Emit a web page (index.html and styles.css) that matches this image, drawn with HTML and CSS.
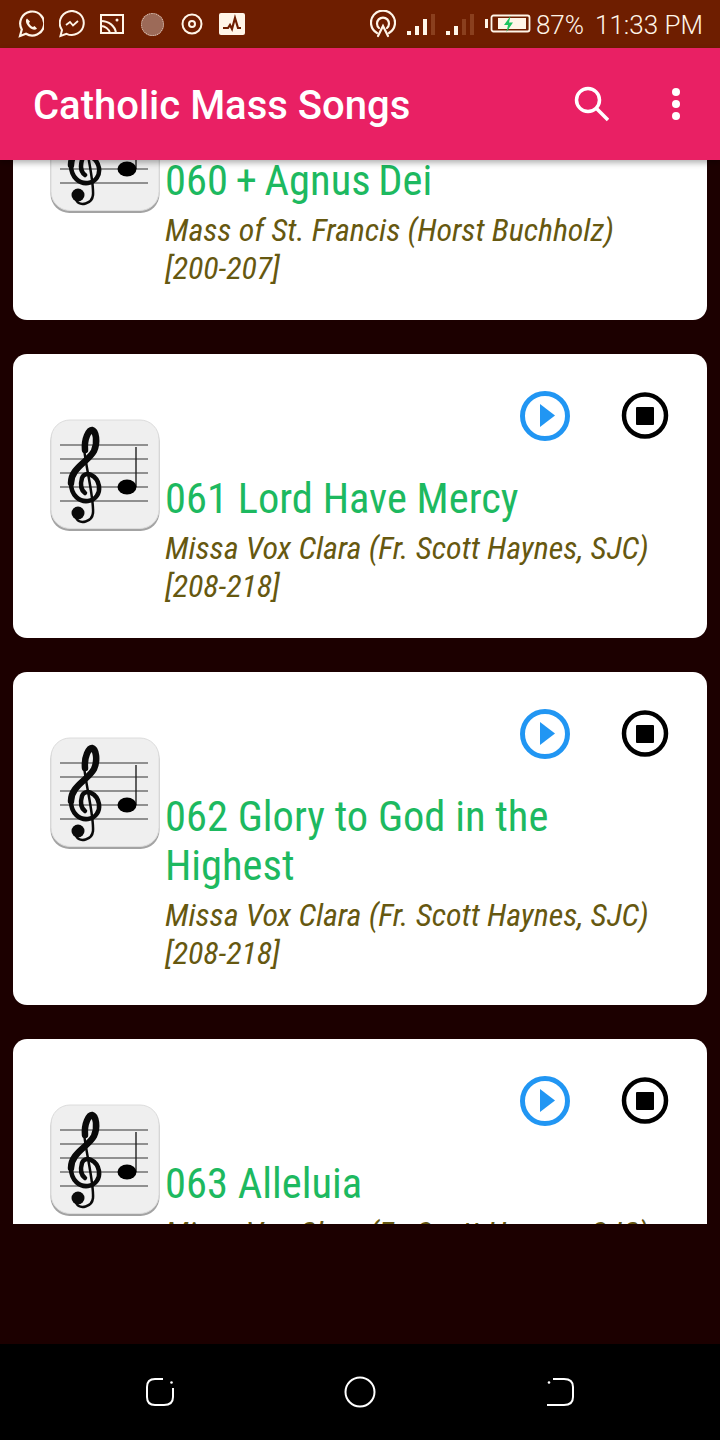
FILE: index.html
```html
<!DOCTYPE html>
<html lang="en">
<head>
  <meta charset="UTF-8" />
  <meta name="viewport" content="width=device-width, initial-scale=1" />
  <title>Catholic Mass Songs</title>
  <link rel="stylesheet" href="styles.css">
</head>
<body>
  <svg class="defs" width="0" height="0">
    <symbol id="sheet" viewBox="0 0 110 114">
      <rect x="0.500" y="4" width="109" height="109" rx="19" fill="#a3a3a3"/>
      <rect x="1" y="2" width="108" height="108.500" rx="19" fill="#efefef" stroke="#dcdcdc"/>
      <g stroke="#333" stroke-width="1.2">
        <line x1="10" y1="27" x2="98" y2="27"/>
        <line x1="10" y1="41" x2="98" y2="41"/>
        <line x1="10" y1="55" x2="98" y2="55"/>
        <line x1="10" y1="69" x2="98" y2="69"/>
        <line x1="10" y1="83" x2="98" y2="83"/>
      </g>
      <line x1="86" y1="29" x2="86" y2="69" stroke="#222" stroke-width="1.4"/>
      <ellipse cx="77" cy="69" rx="9.500" ry="7.500" fill="#000"/>
      <!-- treble clef -->
      <g fill="none" stroke="#0a0a0a" stroke-linecap="round">
        <path stroke-width="2.500" d="M34 30 C36 50 44 80 43 95 C42 104 30 107 26 100"/>
        <path stroke-width="6.500" d="M35 32 C34 20 39 12 42 12 C46 13 48 24 44 33 C38 44 21 50 21 65"/>
        <path stroke-width="4.500" d="M21 65 C21 78 30 84 38 83 C46 82 50 75 49 68 C47 57 35 52 32 60 C30 67 31 72 35 75"/>
      </g>
      <circle cx="28" cy="95" r="6.500" fill="#0a0a0a"/>
    </symbol>
    <symbol id="play" viewBox="0 0 50 50">
      <circle cx="25" cy="25" r="22.500" fill="none" stroke="#2196f3" stroke-width="5"/>
      <path d="M20 13 L35 24.500 L20 36 Z" fill="#2196f3"/>
    </symbol>
    <symbol id="stop" viewBox="0 0 50 50">
      <circle cx="25" cy="24.500" r="21" fill="none" stroke="#000" stroke-width="4.500"/>
      <rect x="16" y="16" width="18" height="18" rx="1" fill="#000"/>
    </symbol>
  </svg>

  <div class="status-bar">
    <div class="status-icons">
      <svg width="26" height="28" viewBox="1 0 26 28" fill="none" stroke="#fff5e8" stroke-width="2.200"><path d="M3 26 L4.800 19.500 A12 12 0 1 1 9 23.800 Z"/><path d="M10 8.500 C8 10 9 14 12 17 C15 20 18.500 20.500 20 18.500 L17.500 16 L16 17 C14.500 16.500 12.500 14.500 12 13 L13 11.500 Z" fill="#fff5e8" stroke="none"/></svg>
      <svg width="26" height="28" viewBox="1 0 26 28" fill="none" stroke="#fff5e8" stroke-width="2"><path d="M2.500 26 L4 20 A12 12 0 1 1 8.500 23.800 Z"/><path d="M8 15 L12 12 L15 15.500 L20 11" stroke-width="1.800"/></svg>
      <svg width="24" height="20" viewBox="0 0 24 20" fill="none" stroke="#fff5e8" stroke-width="2"><rect x="1" y="1" width="22" height="18"/><path d="M1 7 C9 7 15 12 16 19 M1 12 C5 12 9 15 10 19"/><circle cx="17" cy="6" r="1.500" fill="#fff5e8" stroke="none"/></svg>
      <span class="gallery-dot"></span>
      <svg width="22" height="22" viewBox="0 0 22 22" fill="none" stroke="#fff5e8" stroke-width="2"><circle cx="11" cy="11" r="9.500"/><circle cx="11" cy="11" r="3"/></svg>
      <svg class="pulse" width="26" height="22" viewBox="0 0 26 22"><rect width="26" height="22" rx="2" fill="#fff5e8"/><path d="M4 15 L9 15 L11 12 L13 16 L16 5 L19 15 L22 15" fill="none" stroke="#6e1e00" stroke-width="2.200"/></svg>
    </div>
    <div class="status-right">
      <svg width="26" height="28" viewBox="0 0 26 28" fill="none" stroke="#fff5e8" stroke-width="2.200" stroke-linecap="round"><path d="M7 23 A12 12 0 1 1 19 23"/><path d="M9 18 A6 6 0 1 1 17 18"/><path d="M8 26 L13 16 L18 26"/></svg>
      <svg width="28" height="21" viewBox="0 0 28 21"><rect x="0" y="17" width="4" height="4" fill="#fff5e8"/><rect x="8" y="12" width="4" height="9" fill="#fff5e8"/><rect x="16" y="5" width="4" height="16" fill="#fff5e8"/><rect x="24" y="0" width="4" height="21" fill="#8a3f1e"/></svg>
      <svg width="28" height="21" viewBox="0 0 28 21"><rect x="0" y="17" width="4" height="4" fill="#fff5e8"/><rect x="8" y="12" width="4" height="9" fill="#fff5e8"/><rect x="16" y="5" width="4" height="16" fill="#8a3f1e"/><rect x="24" y="0" width="4" height="21" fill="#8a3f1e"/></svg>
      <svg class="battery" width="46" height="20" viewBox="0 0 46 20"><rect x="0" y="5" width="3" height="9" fill="#fff5e8"/><rect x="6.500" y="1.500" width="38" height="16" rx="2" fill="none" stroke="#fff5e8" stroke-width="1.800"/><rect x="13" y="4" width="28" height="11" fill="#fff5e8"/><path d="M25.500 2 L19 11 L23 11 L21.500 18 L28 8.500 L24 8.500 Z" fill="#1fc25f"/></svg>
      <span class="status-text">87%</span>
      <span class="status-text">11:33 PM</span>
    </div>
  </div>

  <header class="app-bar">
    <span class="app-title">Catholic Mass Songs</span>
    <div class="app-actions">
      <svg width="36" height="36" viewBox="0 0 36 36" fill="none" stroke="#fff" stroke-width="3.500"><circle cx="15" cy="14" r="11.500"/><path d="M23 22 L35 34"/></svg>
      <svg width="12" height="36" viewBox="0 0 12 36" fill="#fff"><circle cx="6" cy="6" r="4"/><circle cx="6" cy="18" r="4"/><circle cx="6" cy="30" r="4"/></svg>
    </div>
  </header>

  <main class="song-list">
    <div class="song-card">
      <svg class="song-icon"><use href="#sheet"/></svg>
      <div class="song-body">
        <div class="song-controls">
          <svg class="ctrl"><use href="#play"/></svg>
          <svg class="ctrl"><use href="#stop"/></svg>
        </div>
        <h2 class="song-title tight">060 + Agnus Dei</h2>
        <p class="song-sub">Mass of St. Francis (Horst Buchholz) [200-207]</p>
      </div>
    </div>
    <div class="song-card">
      <svg class="song-icon"><use href="#sheet"/></svg>
      <div class="song-body">
        <div class="song-controls">
          <svg class="ctrl"><use href="#play"/></svg>
          <svg class="ctrl"><use href="#stop"/></svg>
        </div>
        <h2 class="song-title">061 Lord Have Mercy</h2>
        <p class="song-sub">Missa Vox Clara (Fr. Scott Haynes, SJC) [208-218]</p>
      </div>
    </div>
    <div class="song-card">
      <svg class="song-icon"><use href="#sheet"/></svg>
      <div class="song-body">
        <div class="song-controls">
          <svg class="ctrl"><use href="#play"/></svg>
          <svg class="ctrl"><use href="#stop"/></svg>
        </div>
        <h2 class="song-title">062 Glory to God in the Highest</h2>
        <p class="song-sub">Missa Vox Clara (Fr. Scott Haynes, SJC) [208-218]</p>
      </div>
    </div>
    <div class="song-card">
      <svg class="song-icon"><use href="#sheet"/></svg>
      <div class="song-body">
        <div class="song-controls">
          <svg class="ctrl"><use href="#play"/></svg>
          <svg class="ctrl"><use href="#stop"/></svg>
        </div>
        <h2 class="song-title">063 Alleluia</h2>
        <p class="song-sub">Missa Vox Clara (Fr. Scott Haynes, SJC) [208-218]</p>
      </div>
    </div>
  </main>

  <div class="list-empty"></div>

  <nav class="nav-bar">
    <svg width="30" height="30" viewBox="0 0 30 30" fill="none" stroke="#fff" stroke-width="2"><path d="M18 2 L10 2 Q2 2 2 10 L2 20 Q2 28 10 28 L19 28 Q28 28 28 20 L28 11"/><circle cx="26.500" cy="5.500" r="1.300" fill="#fff" stroke="none"/></svg>
    <svg width="32" height="32" viewBox="0 0 32 32" fill="none" stroke="#fff" stroke-width="2"><circle cx="16" cy="16" r="14.500"/></svg>
    <svg width="30" height="30" viewBox="0 0 30 30" fill="none" stroke="#fff" stroke-width="2"><path d="M8 2 L19 2 Q28 2 28 10 L28 20 Q28 28 19 28 L2 28"/><circle cx="4" cy="5.500" r="1.300" fill="#fff" stroke="none"/></svg>
  </nav>
</body>
</html>
```

FILE: styles.css
```css
* {
  box-sizing: border-box;
}
body {
  margin: 0;
  width: 720px;
  height: 1440px;
  overflow: hidden;
  display: flex;
  flex-direction: column;
  background: #1c0000;
  font-family: Roboto, "Noto Sans", sans-serif;
}
.defs {
  position: absolute;
}

.status-bar {
  height: 48px;
  flex: none;
  background: #6e1e00;
  color: #fff5e8;
  display: flex;
  justify-content: space-between;
  align-items: center;
  padding: 0 17px 0 18px;
}
.status-icons {
  display: flex;
  align-items: center;
  gap: 15px;
}
.gallery-dot {
  width: 23px;
  height: 23px;
  margin: 0 2px;
  border-radius: 50%;
  background: #9c6a58;
  border: 1px dotted #e6cdbf;
}
.pulse {
  margin-left: 1px;
}
.status-right {
  display: flex;
  align-items: center;
  gap: 11px;
}
.battery {
  margin-right: -6px;
}
.status-text {
  font-size: 26px;
  font-weight: 300;
  margin-top: 1px;
}

.app-bar {
  height: 112px;
  flex: none;
  background: #e92064;
  color: white;
  display: flex;
  justify-content: space-between;
  align-items: center;
  padding: 0 38px 0 33px;
  position: relative;
  z-index: 2;
  box-shadow: 0 3px 6px rgba(0, 0, 0, 0.3);
}
.app-title {
  font-size: 40px;
  font-weight: 500;
  margin-top: 3px;
}
.app-actions {
  display: flex;
  align-items: center;
  gap: 61px;
}

.song-list {
  height: 1064px;
  flex: none;
  overflow: hidden;
  padding: 0 13px;
  display: flex;
  flex-direction: column;
  gap: 34px;
}
.song-card {
  flex: none;
  background: white;
  border-radius: 14px;
  padding: 37px 37px 33px 37px;
  display: flex;
  align-items: flex-start;
  gap: 5px;
}
.song-card:first-child {
  margin-top: -124px;
}
.song-icon {
  width: 110px;
  height: 114px;
  flex: none;
  margin-top: 27px;
}
.song-body {
  flex: 1;
  min-width: 0;
}
.song-controls {
  display: flex;
  justify-content: flex-end;
  gap: 50px;
  height: 50px;
  margin-bottom: 33px;
}
.ctrl {
  width: 50px;
  height: 50px;
}
.song-title {
  margin: 0 0 6px;
  font-size: 42.5px;
  line-height: 49px;
  font-weight: 400;
  color: #1db960;
  font-stretch: condensed;
}
.song-title.tight {
  word-spacing: -2px;
}
.song-sub {
  margin: 0;
  font-size: 32px;
  line-height: 38px;
  font-style: italic;
  color: #665810;
  font-stretch: condensed;
  letter-spacing: -0.05px;
}

.list-empty {
  flex: 1;
}
.nav-bar {
  height: 96px;
  flex: none;
  background: #000;
  display: grid;
  grid-template-columns: 160px 240px 160px;
  justify-content: center;
  justify-items: center;
  align-items: center;
}
```
